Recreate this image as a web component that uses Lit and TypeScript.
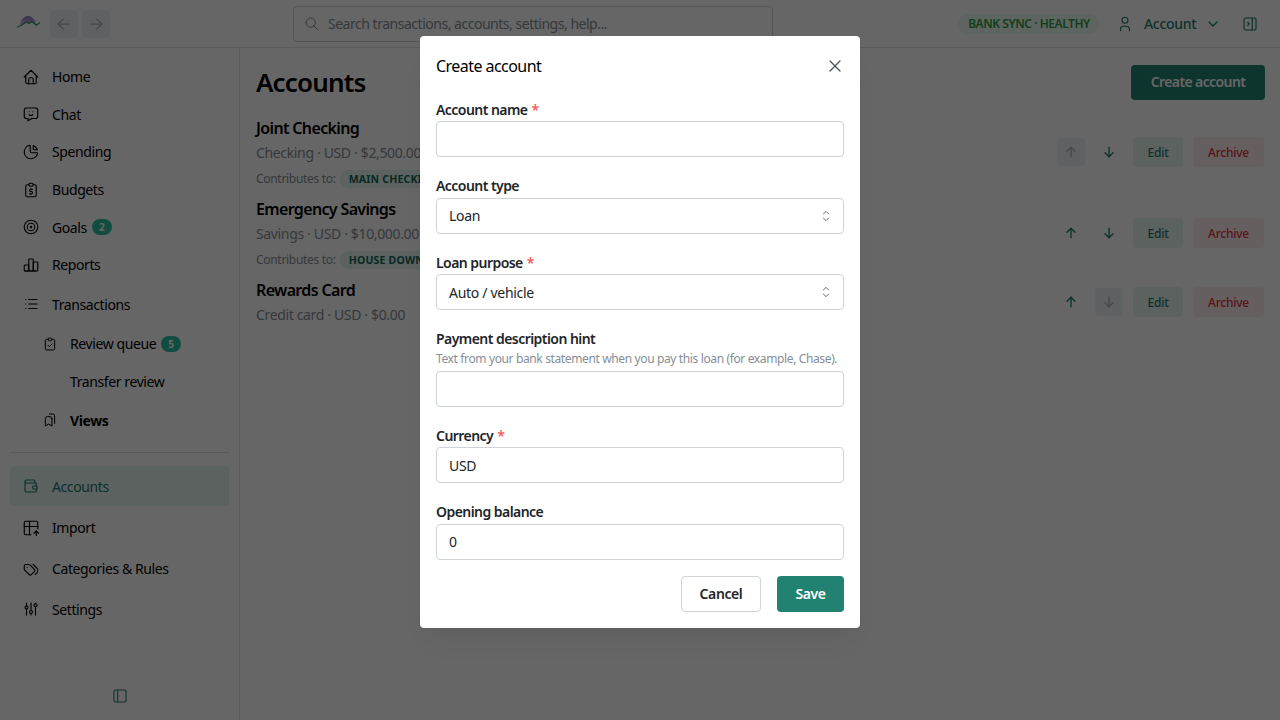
import { LitElement, html, css, svg } from "lit";
import { customElement } from "lit/decorators.js";

const I: Record<string, string[]> = {
  home: ["M5 12l-2 0l9 -9l9 9l-2 0", "M5 12v7a2 2 0 0 0 2 2h10a2 2 0 0 0 2 -2v-7", "M9 21v-6a2 2 0 0 1 2 -2h2a2 2 0 0 1 2 2v6"],
  chat: ["M18 4a3 3 0 0 1 3 3v8a3 3 0 0 1 -3 3h-5l-5 3v-3h-2a3 3 0 0 1 -3 -3v-8a3 3 0 0 1 3 -3h12z", "M9.5 9h.01", "M14.5 9h.01", "M9.5 13a3.5 3.5 0 0 0 5 0"],
  pie: ["M10 3.2a9 9 0 1 0 10.8 10.8a1 1 0 0 0 -1 -1h-6.8a2 2 0 0 1 -2 -2v-7a.9 .9 0 0 0 -1 -.8", "M15 3.5a9 9 0 0 1 5.5 5.5h-4.5a1 1 0 0 1 -1 -1v-4.5"],
  money: ["M9 5h-2a2 2 0 0 0 -2 2v12a2 2 0 0 0 2 2h10a2 2 0 0 0 2 -2v-12a2 2 0 0 0 -2 -2h-2", "M9 3m0 2a2 2 0 0 1 2 -2h2a2 2 0 0 1 2 2v0a2 2 0 0 1 -2 2h-2a2 2 0 0 1 -2 -2z", "M14 11h-2.5a1.5 1.5 0 0 0 0 3h1a1.5 1.5 0 0 1 0 3h-2.5", "M12 17v1m0 -8v1"],
  target: ["M12 12m-1 0a1 1 0 1 0 2 0a1 1 0 1 0 -2 0", "M12 12m-5 0a5 5 0 1 0 10 0a5 5 0 1 0 -10 0", "M12 12m-9 0a9 9 0 1 0 18 0a9 9 0 1 0 -18 0"],
  bars: ["M3 13a1 1 0 0 1 1 -1h4a1 1 0 0 1 1 1v6a1 1 0 0 1 -1 1h-4a1 1 0 0 1 -1 -1z", "M15 9a1 1 0 0 1 1 -1h4a1 1 0 0 1 1 1v10a1 1 0 0 1 -1 1h-4a1 1 0 0 1 -1 -1z", "M9 5a1 1 0 0 1 1 -1h4a1 1 0 0 1 1 1v14a1 1 0 0 1 -1 1h-4a1 1 0 0 1 -1 -1z", "M4 20h14"],
  list: ["M9 6l11 0", "M9 12l11 0", "M9 18l11 0", "M5 6l0 .01", "M5 12l0 .01", "M5 18l0 .01"],
  check: ["M9 5h-2a2 2 0 0 0 -2 2v12a2 2 0 0 0 2 2h10a2 2 0 0 0 2 -2v-12a2 2 0 0 0 -2 -2h-2", "M9 3m0 2a2 2 0 0 1 2 -2h2a2 2 0 0 1 2 2v0a2 2 0 0 1 -2 2h-2a2 2 0 0 1 -2 -2z", "M9 14l2 2l4 -4"],
  marks: ["M15 10v11l-5 -3l-5 3v-11a3 3 0 0 1 3 -3h4a3 3 0 0 1 3 3z", "M11 3h5a3 3 0 0 1 3 3v11"],
  wallet: ["M17 8v-3a1 1 0 0 0 -1 -1h-10a2 2 0 0 0 0 4h12a1 1 0 0 1 1 1v3m0 4v3a1 1 0 0 1 -1 1h-12a2 2 0 0 1 -2 -2v-12", "M20 12v4h-4a2 2 0 0 1 0 -4h4"],
  tableImport: ["M12 21h-7a2 2 0 0 1 -2 -2v-14a2 2 0 0 1 2 -2h14a2 2 0 0 1 2 2v8", "M3 10h18", "M10 3v18", "M19 22v-6", "M22 19l-3 -3l-3 3"],
  tags: ["M3 8v4.172a2 2 0 0 0 .586 1.414l5.71 5.71a2.41 2.41 0 0 0 3.408 0l3.592 -3.592a2.41 2.41 0 0 0 0 -3.408l-5.71 -5.71a2 2 0 0 0 -1.414 -.586h-4.172a2 2 0 0 0 -2 2z", "M18 19l1.592 -1.592a4.82 4.82 0 0 0 0 -6.816l-4.592 -4.592", "M7 10h-.01"],
  sliders: ["M4 10a2 2 0 1 0 4 0a2 2 0 0 0 -4 0", "M6 4v4", "M6 12v8", "M10 16a2 2 0 1 0 4 0a2 2 0 0 0 -4 0", "M12 4v10", "M12 18v2", "M16 7a2 2 0 1 0 4 0a2 2 0 0 0 -4 0", "M18 4v1", "M18 9v11"],
  sideL: ["M4 4m0 2a2 2 0 0 1 2 -2h12a2 2 0 0 1 2 2v12a2 2 0 0 1 -2 2h-12a2 2 0 0 1 -2 -2z", "M9 4l0 16"],
  sideR: ["M4 4m0 2a2 2 0 0 1 2 -2h12a2 2 0 0 1 2 2v12a2 2 0 0 1 -2 2h-12a2 2 0 0 1 -2 -2z", "M15 4v16", "M9 10l2 2l-2 2"],
  user: ["M8 7a4 4 0 1 0 8 0a4 4 0 0 0 -8 0", "M6 21v-2a4 4 0 0 1 4 -4h4a4 4 0 0 1 4 4v2"],
  chev: ["M6 9l6 6l6 -6"],
  sel: ["M8 9l4 -4l4 4", "M16 15l-4 4l-4 -4"],
  search: ["M10 10m-7 0a7 7 0 1 0 14 0a7 7 0 1 0 -14 0", "M21 21l-6 -6"],
  left: ["M5 12l14 0", "M5 12l6 6", "M5 12l6 -6"],
  right: ["M5 12l14 0", "M13 18l6 -6", "M13 6l6 6"],
  up: ["M12 5l0 14", "M18 11l-6 -6", "M6 11l6 -6"],
  down: ["M12 5l0 14", "M18 13l-6 6", "M6 13l6 6"],
  x: ["M18 6l-12 12", "M6 6l12 12"],
};

const icon = (n: string, size = 18, sw = 1.5) => html`<svg class="ic" width=${size} height=${size} viewBox="0 0 24 24" fill="none" stroke="currentColor" stroke-width=${sw} stroke-linecap="round" stroke-linejoin="round">${I[n].map((d) => svg`<path d=${d}></path>`)}</svg>`;

type Nav = { label: string; icon?: string; badge?: string; cls?: string };
const navTop: Nav[] = [
  { label: "Home", icon: "home" },
  { label: "Chat", icon: "chat" },
  { label: "Spending", icon: "pie" },
  { label: "Budgets", icon: "money" },
  { label: "Goals", icon: "target", badge: "2" },
  { label: "Reports", icon: "bars" },
  { label: "Transactions", icon: "list", cls: "tall" },
  { label: "Review queue", icon: "check", badge: "5", cls: "sub" },
  { label: "Transfer review", cls: "sub" },
  { label: "Views", icon: "marks", cls: "sub strong" },
];
const navBottom: Nav[] = [
  { label: "Import", icon: "tableImport", cls: "wide" },
  { label: "Categories & Rules", icon: "tags", cls: "wide" },
  { label: "Settings", icon: "sliders", cls: "wide" },
];
const accounts = [
  { name: "Joint Checking", sub: "Checking · USD · $2,500.00", goal: "MAIN CHECKING", upOff: true, downOff: false },
  { name: "Emergency Savings", sub: "Savings · USD · $10,000.00", goal: "HOUSE DOWN PAYMENT", upOff: false, downOff: false },
  { name: "Rewards Card", sub: "Credit card · USD · $0.00", goal: "", upOff: false, downOff: true },
];

@customElement("app-root")
export class AppRoot extends LitElement {
  static styles = css`
    :host { display: block; width: 1280px; height: 720px; position: relative; overflow: hidden; background: #fff; color: #000;
      font-family: "Noto Sans", "Open Sans", sans-serif; font-size: 14px; letter-spacing: -0.4px; }
    .ic { display: block; flex: none; }
    header { height: 48px; box-sizing: border-box; border-bottom: 1px solid #dee2e6; display: flex; align-items: center; padding: 0 19px 0 17px; position: relative; }
    .logo { width: 24px; height: 12px; margin: 0 9px 4px 0; flex: none; }
    .hbtn { width: 28px; height: 28px; border-radius: 4px; background: #f1f3f5; color: #adb5bd; display: flex; align-items: center; justify-content: center; margin-right: 4px; }
    .search { margin-left: 179px; width: 480px; height: 36px; box-sizing: border-box; border: 1px solid #ced4da; border-radius: 4px; display: flex; align-items: center; padding-left: 10px; gap: 8px; color: #868e96; flex: none; letter-spacing: -0.48px; }
    .pill { margin-left: 185px; height: 20px; width: 142px; border-radius: 10px; background: #ebfbee; color: #2f9e44; font-size: 12px; font-weight: 600; display: flex; align-items: center; justify-content: center; flex: none; letter-spacing: -0.45px; }
    .acct { margin-left: 16px; display: flex; align-items: center; color: #1d7b6b; font-weight: 500; }
    .acct span { margin: 0 9px 0 10px; font-size: 14px; letter-spacing: -0.3px; }
    .toggle { color: #1d7b6b; margin-left: 20px; }
    .body { display: flex; height: 672px; }
    aside { width: 240px; box-sizing: border-box; border-right: 1px solid #dee2e6; padding: 10px 10px 0; display: flex; flex-direction: column; flex: none; }
    .nav { display: flex; align-items: center; height: 37.6px; padding-left: 12px; gap: 12px; border-radius: 4px; flex: none; }
    .nav.tall { height: 41px; }
    .nav.sub { padding-left: 32px; height: 38.2px; }
    .nav.strong .t { font-weight: 700; }
    .nav.wide { height: 40.7px; }
    .nav .gap { width: 16px; flex: none; }
    .nav.active { height: 40px; background: #e3f5f0; color: #1d7b6b; margin-top: 13px; margin-bottom: 1.5px; }
    .nav .b { min-width: 20px; height: 16px; border-radius: 8px; background: #2abd9f; color: #fff; font-size: 10px; font-weight: 700; display: flex; align-items: center; justify-content: center; margin-left: -7px; letter-spacing: 0; }
    hr { border: 0; border-top: 1px solid #dee2e6; margin: 13px 0 0; width: 100%; }
    .collapse { margin-top: auto; margin-bottom: 15px; align-self: center; color: #1d7b6b; }
    main { flex: 1; min-width: 0; padding: 17px 16px 0; }
    .head { display: flex; justify-content: space-between; align-items: flex-start; }
    h1 { margin: 0; font-size: 26px; font-weight: 600; line-height: 34px; letter-spacing: -0.85px; }
    .primary { width: 134px; height: 35px; border-radius: 4px; background: #228272; color: #fff; font-weight: 600; display: flex; align-items: center; justify-content: center; margin-right: -1px; letter-spacing: -0.6px; padding-bottom: 2px; box-sizing: border-box; }
    .rows { display: flex; flex-direction: column; gap: 9px; margin-top: 16px; }
    .row { display: flex; justify-content: space-between; align-items: center; }
    .name { font-size: 16px; font-weight: 600; line-height: 24px; letter-spacing: -0.65px; }
    .subt { color: #868e96; line-height: 22px; margin-top: 2px; letter-spacing: -0.35px; }
    .contrib { display: flex; align-items: center; gap: 4px; color: #868e96; font-size: 12px; line-height: 18px; margin-top: 6px; letter-spacing: -0.3px; }
    .goal { background: #e3f5f0; color: #14665a; font-size: 10.5px; font-weight: 700; border-radius: 10px; padding: 0 9px; height: 18px; display: flex; align-items: center; white-space: nowrap; letter-spacing: .2px; }
    .ctl { display: flex; align-items: center; }
    .arrow { width: 28px; height: 28px; border-radius: 4px; display: flex; align-items: center; justify-content: center; color: #1d7b6b; margin-right: 10px; }
    .arrow.off { background: #f1f3f5; color: #adb5bd; }
    .edit, .archive { height: 30px; border-radius: 4px; display: flex; align-items: center; justify-content: center; font-size: 12px; font-weight: 500; letter-spacing: -0.25px; }
    .edit { width: 50px; background: #e6f5f1; color: #1d7b6b; margin-right: 10px; }
    .archive { width: 71px; background: #ffeded; color: #e03140; }
    .overlay { position: absolute; inset: 0; background: rgba(0, 0, 0, .6); display: flex; justify-content: center; padding-top: 36px; box-sizing: border-box; }
    .modal { width: 440px; height: 592px; box-sizing: border-box; background: #fff; border-radius: 4px; box-shadow: 0 1px 3px rgba(0,0,0,.05), 0 20px 25px -7px rgba(0,0,0,.05); padding: 0 16px 16px; }
    .mhead { height: 60.9px; display: flex; align-items: center; justify-content: space-between; font-size: 16px; letter-spacing: -0.55px; }
    .close { color: #495057; margin-right: -1px; }
    .field { margin-bottom: 16px; }
    .lab { font-weight: 600; line-height: 25px; margin-bottom: -0.6px; display: block; color: #212529; letter-spacing: -0.55px; }
    .lab i { font-style: normal; color: #fa5252; margin-left: 4px; font-weight: 500; }
    .hint { color: #868e96; font-size: 12px; line-height: 18.6px; margin: -1px 0 2.2px; letter-spacing: -0.37px; white-space: nowrap; }
    .inp { height: 36px; box-sizing: border-box; border: 1px solid #ced4da; border-radius: 4px; display: flex; align-items: center; justify-content: space-between; padding: 0 9px 0 12px; color: #212529; letter-spacing: -0.3px; }
    .inp .ic { color: #495057; }
    .actions { display: flex; justify-content: flex-end; gap: 16px; margin-top: 16px; }
    .btn { height: 36px; border-radius: 4px; box-sizing: border-box; display: flex; align-items: center; justify-content: center; font-weight: 600; }
    .cancel { width: 80px; border: 1px solid #ced4da; color: #212529; }
    .save { width: 67px; background: #228272; color: #fff; }
  `;

  private nav(n: Nav, active = false) {
    return html`<div class="nav ${n.cls ?? ""} ${active ? "active" : ""}">
      ${n.icon ? icon(n.icon, (n.cls ?? "").includes("sub") ? 16 : 18) : html`<span class="gap"></span>`}
      <span class="t">${n.label}</span>
      ${n.badge ? html`<span class="b">${n.badge}</span>` : ""}
    </div>`;
  }

  private field(label: string, value = "", opts: { req?: boolean; sel?: boolean; hint?: string } = {}) {
    return html`<div class="field">
      <label class="lab">${label}${opts.req ? html`<i>*</i>` : ""}</label>
      ${opts.hint ? html`<div class="hint">${opts.hint}</div>` : ""}
      <div class="inp"><span>${value}</span>${opts.sel ? icon("sel", 16, 1.25) : ""}</div>
    </div>`;
  }

  render() {
    return html`
      <header>
        <svg class="logo" viewBox="0 0 24 12">
          <defs><linearGradient id="dome" x1="0" y1="0" x2="0" y2="1"><stop offset="0" stop-color="#8f78b8"></stop><stop offset="1" stop-color="#e0b8f0"></stop></linearGradient></defs>
          <path d="M3 9A8 9 0 0 1 19 9L15 5.5 12 7.5 9.7 5.7 4 9.5z" fill="url(#dome)"></path>
          <path d="M.3 11.3L4 9.5 9.7 5.7 12 7.5 15 5.5 19 9 21 8 23 6.7" fill="none" stroke="#2f8f5f" stroke-width="1.1"></path>
        </svg>
        <div class="hbtn">${icon("left", 20)}</div>
        <div class="hbtn">${icon("right", 20)}</div>
        <div class="search">${icon("search", 16)}<span>Search transactions, accounts, settings, help...</span></div>
        <div class="pill">BANK SYNC · HEALTHY</div>
        <div class="acct">${icon("user", 18)}<span>Account</span>${icon("chev", 16, 2)}</div>
        <div class="toggle">${icon("sideR", 18)}</div>
      </header>
      <div class="body">
        <aside>
          ${navTop.map((n) => this.nav(n))}
          <hr />
          ${this.nav({ label: "Accounts", icon: "wallet" }, true)}
          ${navBottom.map((n) => this.nav(n))}
          <div class="collapse">${icon("sideL", 18)}</div>
        </aside>
        <main>
          <div class="head"><h1>Accounts</h1><div class="primary">Create account</div></div>
          <div class="rows">
            ${accounts.map((a) => html`<div class="row">
              <div>
                <div class="name">${a.name}</div>
                <div class="subt">${a.sub}</div>
                ${a.goal ? html`<div class="contrib">Contributes to: <span class="goal">${a.goal}</span></div>` : ""}
              </div>
              <div class="ctl">
                <div class="arrow ${a.upOff ? "off" : ""}">${icon("up", 16, 2)}</div>
                <div class="arrow ${a.downOff ? "off" : ""}">${icon("down", 16, 2)}</div>
                <div class="edit">Edit</div>
                <div class="archive">Archive</div>
              </div>
            </div>`)}
          </div>
        </main>
      </div>
      <div class="overlay">
        <div class="modal">
          <div class="mhead"><span>Create account</span><span class="close">${icon("x", 20)}</span></div>
          ${this.field("Account name", "", { req: true })}
          ${this.field("Account type", "Loan", { sel: true })}
          ${this.field("Loan purpose", "Auto / vehicle", { req: true, sel: true })}
          ${this.field("Payment description hint", "", { hint: "Text from your bank statement when you pay this loan (for example, Chase)." })}
          ${this.field("Currency", "USD", { req: true })}
          ${this.field("Opening balance", "0")}
          <div class="actions"><div class="btn cancel">Cancel</div><div class="btn save">Save</div></div>
        </div>
      </div>
    `;
  }
}
